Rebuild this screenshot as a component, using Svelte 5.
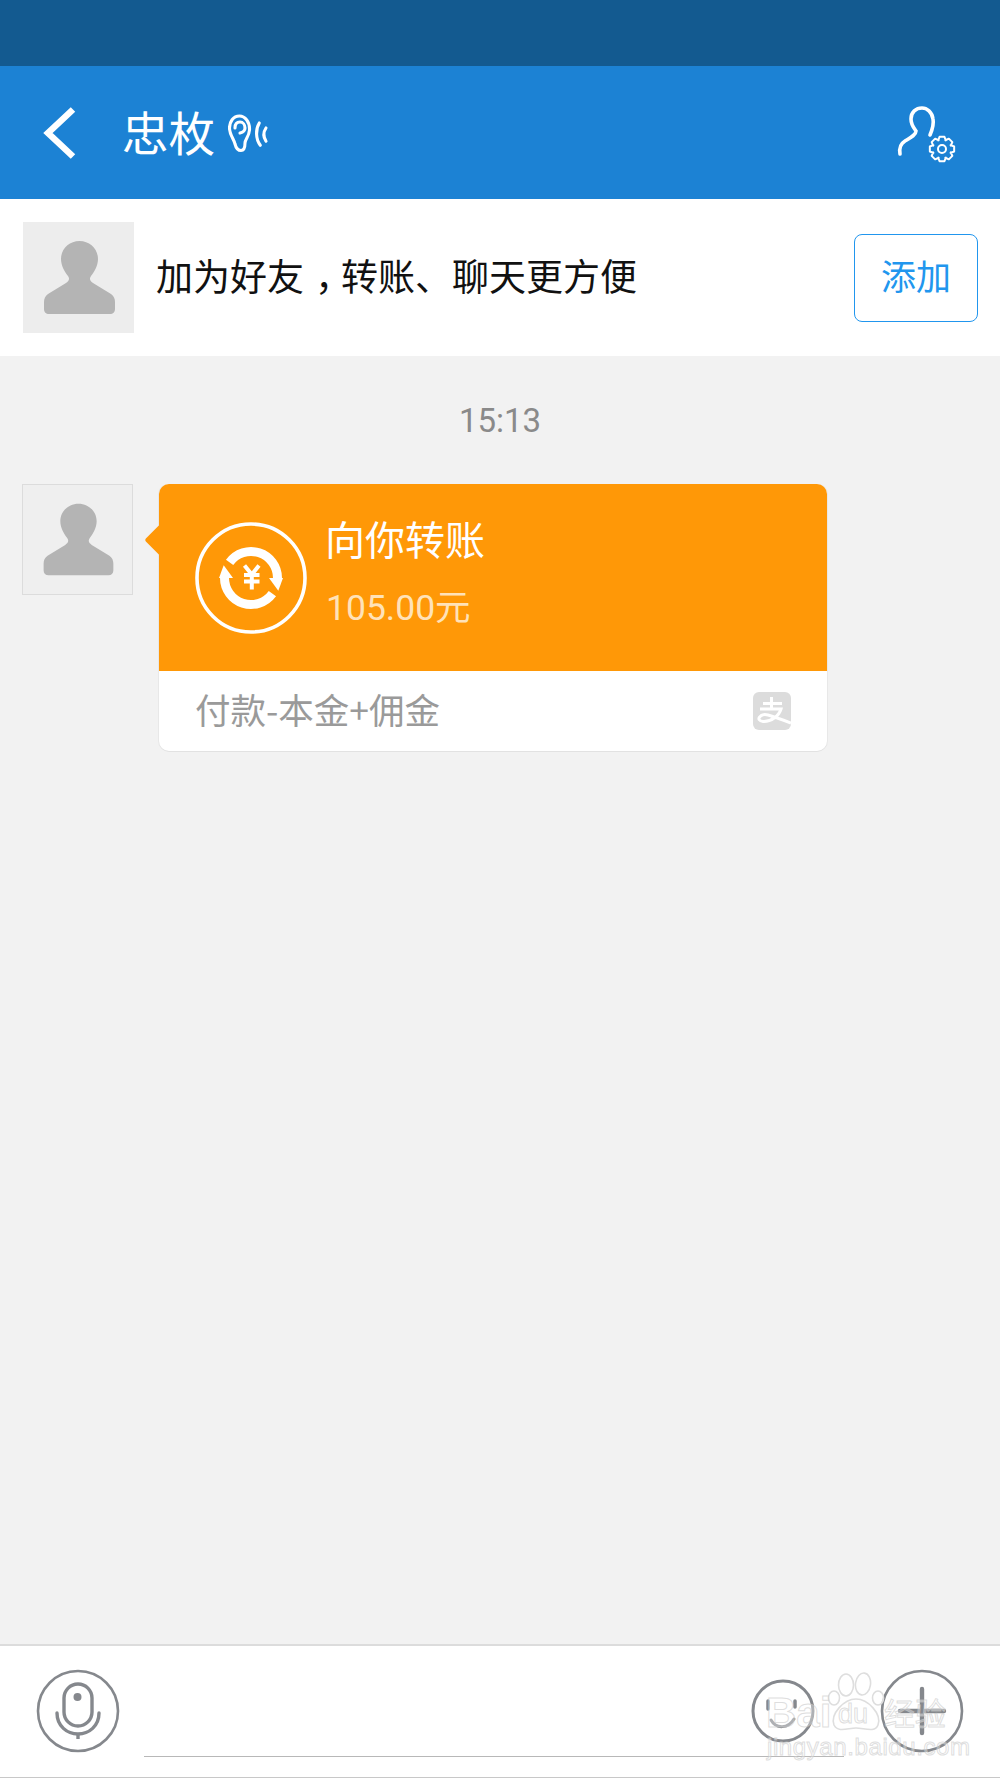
<script>
  const gearPath = (() => {
    const cx = 14, cy = 14, teeth = 8, ro = 12.4, ri = 9.4;
    let d = '';
    for (let i = 0; i < teeth; i++) {
      const a = (i * 2 * Math.PI) / teeth;
      const pts = [[-0.42, ri], [-0.2, ro], [0.2, ro], [0.42, ri]];
      for (const [off, r] of pts) {
        const x = (cx + r * Math.cos(a + off)).toFixed(2);
        const y = (cy + r * Math.sin(a + off)).toFixed(2);
        d += (d ? 'L' : 'M') + x + ' ' + y;
      }
    }
    return d + 'Z';
  })();
  const person = 'M56.5 19C67 19 75 27 75 37C75 44 71 50 68 54C66 57 67 59 70 61L88 72C91 74 92 77 92 80L92 87C92 90 90 92 87 92L26 92C23 92 21 90 21 87L21 80C21 77 22 74 25 72L43 61C46 59 47 57 45 54C42 50 38 44 38 37C38 27 46 19 56.5 19Z';
</script>

<div class="page">
  <div class="status"></div>

  <header class="top">
    <svg class="back" viewBox="0 0 40 56" width="40" height="56" aria-hidden="true">
      <path d="M33 4.5L8 28L33 51.5" fill="none" stroke="#fff" stroke-width="6.5" />
    </svg>
    <h1 class="name">忠枚</h1>
    <svg class="ear" viewBox="0 0 42 40" width="42" height="40" aria-hidden="true">
      <g fill="none" stroke="#fff" stroke-width="3.1" stroke-linecap="round">
        <path d="M21.5 17C22 9 17 3 11.5 3C5 3 1.5 9 1.5 15C1.5 22 6 26 7 31C8 35 10 37.5 13 37.5C16 37.5 17 34 17 30C17 26 21 24 21.5 17Z" />
        <path d="M7 15C7 11 9 9 12 9C15 9 17 12 17 15C17 18 14 19.5 12 20" />
        <path d="M31.3 10C27.5 16 27.5 26 32.3 32.3" />
        <path d="M38 15C35.3 19 35.3 24 38 28.3" />
      </g>
    </svg>
    <svg class="usergear" viewBox="0 0 60 60" width="60" height="60" aria-hidden="true">
      <path d="M34 31C37 24 38 20 37 15C36 8 31 4 26 4C20 4 15 8 15 15C15 21 18 24 20 27C20 31 14 34 9 37C4 40 3 44 4 50" fill="none" stroke="#fff" stroke-width="3.6" stroke-linecap="round" />
      <g transform="translate(32 31)">
        <path d={gearPath} fill="#1c82d4" stroke="#fff" stroke-width="2" stroke-linejoin="round" />
        <circle cx="14" cy="14" r="4" fill="none" stroke="#fff" stroke-width="2" />
      </g>
    </svg>
  </header>

  <section class="friend">
    <svg class="avatar plain" viewBox="0 0 111 111" aria-hidden="true"><path d={person} fill="#b4b4b4" /></svg>
    <p class="invite">加为好友<span class="comma">，</span>转账、聊天更方便</p>
    <button class="add"><span>添加</span></button>
  </section>

  <main class="chat">
    <div class="time">15:13</div>
    <div class="msg">
      <svg class="avatar bordered" viewBox="0 0 111 111" aria-hidden="true"><path d={person} fill="#b4b4b4" /></svg>
      <div class="bubble">
        <span class="arrow"></span>
        <div class="orange">
          <svg class="transfer" viewBox="0 0 120 120" width="120" height="120" aria-hidden="true">
            <circle cx="60" cy="60" r="54" fill="none" stroke="#fff" stroke-width="3.6" />
            <path d="M38.6 44.4A26.5 26.5 0 0 1 86.5 60" fill="none" stroke="#fff" stroke-width="9" />
            <path d="M78 60L92 60L87.3 72.7Z" fill="#fff" />
            <g transform="rotate(180 60 60)">
              <path d="M38.6 44.4A26.5 26.5 0 0 1 86.5 60" fill="none" stroke="#fff" stroke-width="9" />
              <path d="M78 60L92 60L87.3 72.7Z" fill="#fff" />
            </g>
            <path d="M53.5 47.5L60.8 56.5L68 47.5M60.8 56.5V71.5M53 57H68.5M53 63.5H68.5" fill="none" stroke="#fff" stroke-width="4" />
          </svg>
          <div class="info">
            <div class="title">向你转账</div>
            <div class="amount">105.00元</div>
          </div>
        </div>
        <div class="foot">
          <span class="memo">付款-本金+佣金</span>
          <svg class="alipay" viewBox="0 0 38 38" width="38" height="38" aria-hidden="true">
            <rect width="38" height="38" rx="6" fill="#dcdcdc" />
            <path d="M10 11.5H29M18.5 5V17M7 17H28C26 24 18 30 10 29.5C2 28.5 7 21 15 23C22 25 30 28 38 31" fill="none" stroke="#fff" stroke-width="3" />
          </svg>
        </div>
      </div>
    </div>
  </main>

  <footer class="bar">
    <svg class="mic" viewBox="0 0 90 90" width="90" height="90" aria-hidden="true">
      <g fill="none" stroke="#85888d">
        <circle cx="45" cy="45" r="40" stroke-width="2.6" />
        <rect x="31" y="18" width="28" height="42" rx="14" stroke-width="3.4" />
        <path d="M24 47C24 60 34 68 45 68C56 68 66 60 66 47" stroke-width="3.4" stroke-linecap="round" />
        <path d="M45 68V73" stroke-width="3.4" />
      </g>
      <circle cx="44.5" cy="31" r="4" fill="#85888d" />
    </svg>
    <div class="input"></div>
    <svg class="smile" viewBox="0 0 66 66" width="66" height="66" aria-hidden="true">
      <g fill="none" stroke="#85888d" stroke-linecap="round">
        <circle cx="33" cy="33" r="30" stroke-width="3" />
        <path d="M18 23V31M45 23V29" stroke-width="3.5" />
        <path d="M21 42C26 51 38 51 44 41" stroke-width="3" />
      </g>
    </svg>
    <svg class="plus" viewBox="0 0 84 84" width="84" height="84" aria-hidden="true">
      <g fill="none" stroke="#85888d" stroke-linecap="round">
        <circle cx="42" cy="42" r="40" stroke-width="2.6" />
        <path d="M42 20V64M20 42H64" stroke-width="4.4" />
      </g>
    </svg>
    <div class="mark" aria-hidden="true">
      <svg class="paw" viewBox="0 0 60 64" width="60" height="64">
        <g fill="rgba(255,255,255,.5)" stroke="#dedede" stroke-width="1.6">
          <ellipse cx="19" cy="13" rx="7.5" ry="11" />
          <ellipse cx="36" cy="12" rx="7.5" ry="11" transform="rotate(8 36 12)" />
          <ellipse cx="7" cy="26" rx="5.5" ry="7" />
          <ellipse cx="51" cy="26" rx="5.5" ry="7" />
          <path d="M29 27C41 27 55 42 51 53C48 61 37 56 29 56C21 56 11 61 7 53C3 42 17 27 29 27Z" />
        </g>
      </svg>
      <span class="bai">Bai</span>
      <span class="du">du</span>
      <span class="jy">经验</span>
      <span class="url">jingyan.baidu.com</span>
    </div>
  </footer>
</div>

<style>
  :global(body) { margin: 0; background: #f2f2f2; }
  .page {
    width: 1000px;
    height: 1778px;
    display: flex;
    flex-direction: column;
    overflow: hidden;
    font-family: "Noto Sans CJK SC", Roboto, sans-serif;
  }
  .status { height: 66px; background: #135a90; flex: none; }
  .top {
    height: 133px;
    flex: none;
    background: #1c82d4;
    display: flex;
    align-items: center;
    color: #fff;
    padding: 0 44px 0 40px;
    box-sizing: border-box;
  }
  .back { flex: none; }
  .name {
    margin: 0 0 0 42px;
    font-size: 46.5px;
    font-weight: 400;
    line-height: 1;
    position: relative;
    top: -1px;
  }
  .ear { margin-left: 13px; flex: none; }
  .usergear { margin-left: auto; flex: none; margin-top: 2px; }

  .friend {
    height: 157px;
    flex: none;
    background: #fff;
    display: flex;
    align-items: center;
    padding: 0 22px 0 23px;
    box-sizing: border-box;
  }
  .avatar { width: 111px; height: 111px; flex: none; box-sizing: border-box; background: #ededed; }
  .avatar.bordered { border: 1px solid #dcdcdc; background: #efefef; }
  .invite {
    margin: -4px 0 0 22px;
    font-size: 37px;
    line-height: 1;
    color: #111;
    flex: 1;
  }
  .comma { font-feature-settings: "halt"; margin-left: 0.3em; margin-right: 0.2em; }
  .add {
    width: 124px;
    height: 88px;
    box-sizing: border-box;
    border: 1.5px solid #2196ee;
    border-radius: 8px;
    background: #fff;
    color: #2196ee;
    font: inherit;
    font-size: 35px;
    padding: 0 0 6px;
  }

  .chat {
    flex: 1;
    background: #f2f2f2;
    padding: 0 22px;
  }
  .time {
    height: 128px;
    line-height: 130px;
    text-align: center;
    font-family: Roboto, sans-serif;
    font-size: 33px;
    color: #8a8a8a;
  }
  .msg { display: flex; align-items: flex-start; gap: 26px; }
  .bubble {
    position: relative;
    width: 668px;
    box-sizing: border-box;
    border-radius: 10px;
    background: #fff;
    box-shadow: 0 1px 0 0 #e2e2e2, 1px 0 0 0 #e8e8e8, -1px 0 0 0 #e8e8e8;
  }
  .arrow {
    position: absolute;
    left: -10px;
    top: 45px;
    width: 22px;
    height: 22px;
    background: #ff9807;
    transform: rotate(45deg);
    border-radius: 2px;
  }
  .orange {
    position: relative;
    height: 187px;
    background: #ff9807;
    border-radius: 10px 10px 0 0;
    display: flex;
    align-items: center;
    padding-left: 32px;
    box-sizing: border-box;
  }
  .transfer { flex: none; }
  .info { margin-left: 15px; margin-top: -12px; }
  .title { font-size: 40px; line-height: 48px; color: #fff; margin-left: -1px; }
  .amount {
    margin-top: 24px;
    font-family: Roboto, "Noto Sans CJK SC", sans-serif;
    font-size: 35.5px;
    line-height: 44px;
    color: #ffe2b8;
  }
  .foot {
    height: 80px;
    display: flex;
    align-items: center;
    justify-content: space-between;
    padding: 0 36px 0 37px;
  }
  .memo { font-size: 35.5px; color: #9a9a9a; line-height: 1; margin-top: -4px; margin-left: -1px; }

  .bar {
    position: relative;
    height: 134px;
    flex: none;
    box-sizing: border-box;
    background: #fff;
    border-top: 2px solid #dcdcdc;
    border-bottom: 1px solid #c8c8c8;
    display: flex;
    align-items: center;
    padding: 0 36px 2px 33px;
  }
  .mic { flex: none; }
  .input {
    flex: none;
    width: 700px;
    margin-left: 21px;
    align-self: flex-end;
    border-bottom: 1.5px solid #b8b8b8;
    margin-bottom: 18px;
    margin-right: -105px;
  }
  .smile { flex: none; margin-left: auto; margin-right: 64px; position: relative; }
  .plus { flex: none; }
  .mark { position: absolute; inset: 0; pointer-events: none; }
  .paw { position: absolute; left: 827px; top: 26px; }
  .bai, .du, .jy, .url {
    position: absolute;
    color: rgba(255, 255, 255, 0.35);
    -webkit-text-stroke: 1px rgba(200, 200, 200, 0.6);
    line-height: 1;
    white-space: nowrap;
    font-family: "Liberation Sans", sans-serif;
  }
  .bai { left: 766px; top: 46px; font-size: 42px; font-weight: 700; }
  .du { left: 838px; top: 55px; font-size: 27px; }
  .jy { left: 884px; top: 50px; font-size: 31px; font-family: "Noto Sans CJK SC", sans-serif; }
  .url { left: 767px; top: 89px; font-size: 24px; letter-spacing: 0.6px; }
</style>
